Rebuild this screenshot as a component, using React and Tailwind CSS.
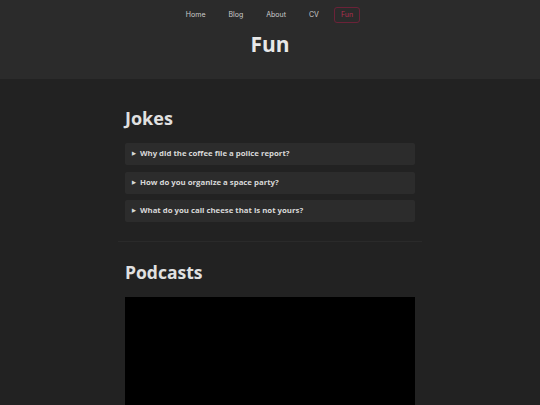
import React from "react";

const jokes = [
  "Why did the coffee file a police report?",
  "How do you organize a space party?",
  "What do you call cheese that is not yours?",
];

export default function App() {
  return (
    <div className="min-h-[405px] bg-[#222222] text-[#e0e0e0]" style={{ fontFamily: '"Open Sans", "Noto Sans", sans-serif' }}>
      <header className="bg-[#2b2b2b] h-[79px] flex flex-col items-center">
        <nav className="flex items-center gap-[7px] pt-[7px] pr-[2px] text-[7px] text-[#cccccc]" style={{ fontFamily: 'Inter, "Liberation Sans", sans-serif' }}>
          <a className="px-[8px] h-[16px] flex items-center text-[#cccccc]">Home</a>
          <a className="px-[8px] h-[16px] flex items-center text-[#cccccc]">Blog</a>
          <a className="px-[8px] h-[16px] flex items-center text-[#cccccc]">About</a>
          <a className="px-[8px] h-[16px] flex items-center text-[#cccccc]">CV</a>
          <a className="px-[6px] h-[16px] flex items-center border border-[#6b2238] rounded-[3px] text-[#b0304f]">Fun</a>
        </nav>
        <h1 className="mt-[8px] text-[21px] font-bold leading-[26px] text-[#e8e8e8]">Fun</h1>
      </header>
      <main className="w-[304px] mx-auto pt-[26px]">
        <section className="px-[7px]">
          <h2 className="text-[18px] font-bold leading-[26px] text-[#e0e0e0]">Jokes</h2>
          <div className="mt-[12px] flex flex-col gap-[6.5px]">
            {jokes.map((j) => (
              <details key={j} className="bg-[#2c2c2c] rounded-[2px]">
                <summary className="h-[22px] flex items-center px-[7px] text-[7.8px] font-bold text-[#d8d8d8] cursor-pointer list-none">
                  <span className="text-[5px] mr-[4px]">▶</span>
                  {j}
                </summary>
              </details>
            ))}
          </div>
        </section>
        <hr className="mt-[19px] border-0 h-px bg-[#2a2a2a]" />
        <section className="px-[7px] pt-[17px]">
          <h2 className="text-[17.5px] font-bold leading-[26px] text-[#e0e0e0]">Podcasts</h2>
          <div className="mt-[12px] h-[160px] bg-black" />
        </section>
      </main>
    </div>
  );
}
